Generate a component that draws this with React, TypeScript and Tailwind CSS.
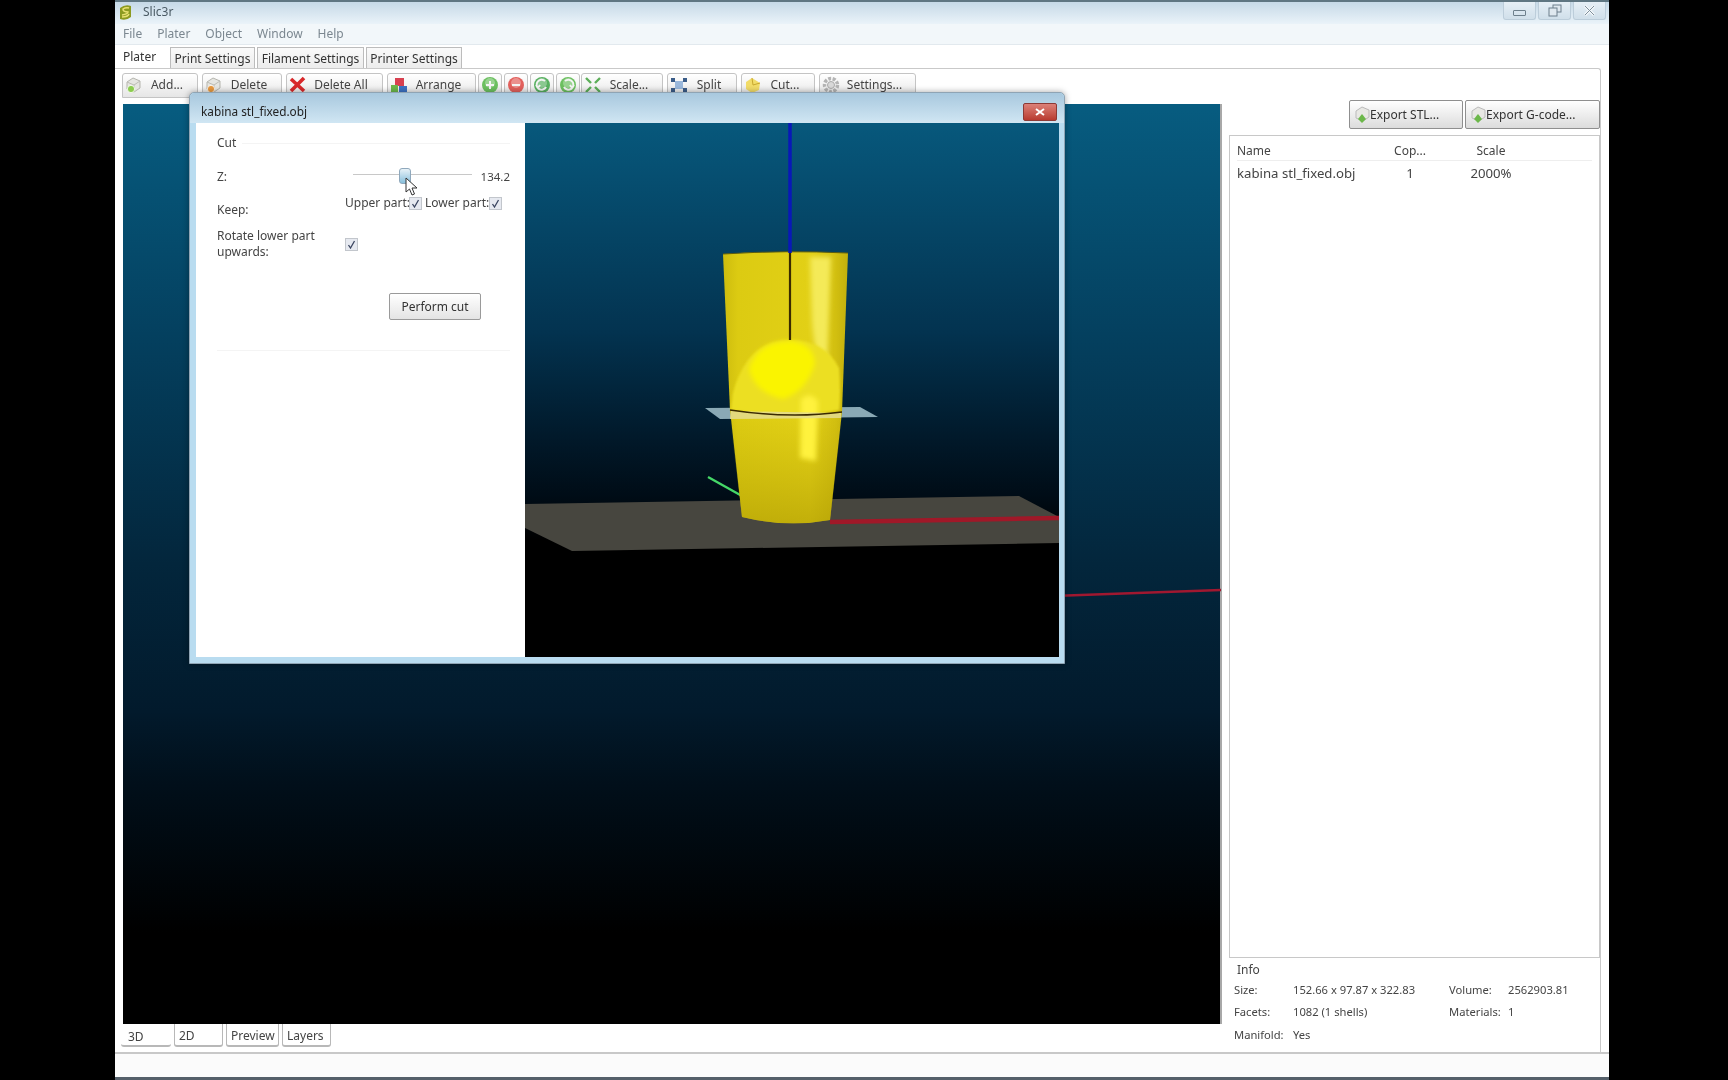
import { ReactNode } from "react";

const font = { fontFamily: '"Noto Sans", "Open Sans", sans-serif' };

function Brick({ dot }: { dot: string }) {
  return (
    <svg width="18" height="18" viewBox="0 0 18 18">
      <path d="M2 6 L8 2 L15 5 L15 12 L9 16 L2 13 Z" fill="#e6e6e2" stroke="#b5b5ae" />
      <path d="M2 6 L9 9 L15 5 M9 9 V16" fill="none" stroke="#bdbdb6" />
      <circle cx="6" cy="13" r="3.6" fill={dot} stroke="#fff" strokeWidth="0.8" />
    </svg>
  );
}

function RoundIcon({ color, sign }: { color: string; sign: string }) {
  return (
    <svg width="18" height="18" viewBox="0 0 18 18">
      <circle cx="9" cy="9" r="8" fill={color} />
      <circle cx="9" cy="7" r="5" fill="#fff" opacity="0.3" />
      <path d={sign} stroke="#f4f4f4" strokeWidth="2" fill="none" />
    </svg>
  );
}

function ToolButton({ w, icon, label, pad = "pl-[2px]" }: { w: string; icon: ReactNode; label?: string; pad?: string }) {
  return (
    <div className={`${w} ${pad} h-[25px] pb-[2px] shrink-0 flex items-center rounded-t-[3px] border border-[#c4c4c4] bg-gradient-to-b from-white to-[#e6e6e6]`}>
      {icon}
      {label && <span className="flex-1 pr-[6px] text-center text-[12px] text-[#444]">{label}</span>}
    </div>
  );
}

function TopTab({ w, label }: { w: string; label: string }) {
  return (
    <div className={`${w} h-[21px] pt-[2px] shrink-0 flex items-center justify-center border border-b-0 border-[#bcbcbc] bg-gradient-to-b from-[#fafafa] to-[#ececec] text-[12px] text-[#333]`}>
      {label}
    </div>
  );
}

function BottomTab({ w, label, active }: { w: string; label: string; active?: boolean }) {
  return (
    <div className={`${w} h-[23px] shrink-0 flex items-center pl-[4px] border-b-2 border-[#b8b8b8] rounded-b-[3px] text-[12px] text-[#444] ${active ? "pt-[4px] pl-[7px]" : "border-r border-l pt-[2px]"}`}>
      {label}
    </div>
  );
}

function CheckBox() {
  return (
    <div className="w-[13px] h-[13px] shrink-0 flex items-center justify-center border border-[#c2c6cc] bg-[#e6e9f0]">
      <svg width="9" height="9" viewBox="0 0 9 9">
        <path d="M1.5 5 L3.5 8 L7.5 1" fill="none" stroke="#3b4560" strokeWidth="1.3" />
      </svg>
    </div>
  );
}

function WinButton({ children }: { children: ReactNode }) {
  return (
    <div className="w-[33px] h-[18px] flex items-center justify-center rounded-b-[3px] border border-t-0 border-[#bccdda] bg-gradient-to-b from-[#e6eff6] to-[#d0dfea]">
      {children}
    </div>
  );
}

function ExportButton({ w, label }: { w: string; label: string }) {
  return (
    <div className={`${w} h-[29px] flex items-center pl-[5px] rounded-[2px] border border-[#8f8f8f] bg-gradient-to-b from-white to-[#dcdcdc] text-[12px] text-[#333]`}>
      <svg width="16" height="18" viewBox="0 0 16 18">
        <path d="M1 5 L7 1 L14 4 L14 11 L8 15 L1 12 Z" fill="#e8e8e4" stroke="#bbb" />
        <path d="M3 13 L7 8 L11 13 L7 17 Z" fill="#6cb84a" />
      </svg>
      <span className="-ml-[1px]">{label}</span>
    </div>
  );
}

function InfoRow({ label, value, label2, value2 }: { label: string; value: string; label2?: string; value2?: string }) {
  return (
    <div className="h-[22.5px] flex items-center text-[11.2px] text-[#444]">
      <span className="w-[59px]">{label}</span>
      <span className="w-[156px]">{value}</span>
      {label2 && <span className="w-[59px]">{label2}</span>}
      {value2 && <span>{value2}</span>}
    </div>
  );
}

function ModelScene() {
  return (
    <svg width="534" height="535" viewBox="0 0 534 535">
      <defs>
        <linearGradient id="bodyShade" x1="0" x2="1" y1="0" y2="0">
          <stop offset="0" stopColor="#cdbc0e" />
          <stop offset="0.12" stopColor="#dccb12" />
          <stop offset="0.7" stopColor="#e2d016" />
          <stop offset="0.9" stopColor="#d2bf10" />
          <stop offset="1" stopColor="#c2b00c" />
        </linearGradient>
        <linearGradient id="lowerShade" x1="0" x2="0" y1="0" y2="1">
          <stop offset="0" stopColor="#b39f00" stopOpacity="0" />
          <stop offset="1" stopColor="#a89400" stopOpacity="0.55" />
        </linearGradient>
        <filter id="soft" x="-30%" y="-30%" width="160%" height="160%">
          <feGaussianBlur stdDeviation="2.5" />
        </filter>
        <filter id="softer" x="-30%" y="-30%" width="160%" height="160%">
          <feGaussianBlur stdDeviation="0.8" />
        </filter>
      </defs>
      <polygon points="0,381 494,373 534,394 534,420 47,428 0,405" fill="#47463f" />
      <line x1="183" y1="354" x2="217" y2="373" stroke="#45d868" strokeWidth="2.4" />
      <path d="M305 399 L534 395" stroke="#a01828" strokeWidth="4.5" />
      <polygon points="180,285 335,284 353,294 195,296" fill="#8aa9b5" />
      <path d="M198 131 Q260 127 323 130 L317 289 L305 397 Q262 405 217 394 L205 287 Z" fill="url(#bodyShade)" />
      <path d="M205 296 L317 296 L305 397 Q262 405 217 394 Z" fill="url(#lowerShade)" />
      <path d="M285 134 L306 134 L302 250 Q290 240 287 200 Z" fill="#f4ea58" filter="url(#soft)" />
      <path d="M208 270 Q222 217 265 217 Q300 217 314 245 Q316 270 314 287 Q265 296 206 287 Z" fill="#ecdf20" filter="url(#softer)" />
      <path d="M224 246 Q232 219 265 218 Q288 220 290 240 Q282 268 258 276 Q230 270 224 246 Z" fill="#faf400" filter="url(#soft)" />
      <path d="M276 276 Q285 268 293 278 L291 338 L275 335 Z" fill="#fff23c" filter="url(#soft)" />
      <polygon points="206,288 316,290 316,295 205,296" fill="#e4dc90" opacity="0.85" />
      <path d="M205 287 Q265 296 317 289" fill="none" stroke="#3a2a00" strokeWidth="1.6" />
      <path d="M198 131 Q260 127 323 130" fill="none" stroke="#5a5a10" strokeWidth="1" />
      <path d="M265 0 V130" stroke="#0a18b8" strokeWidth="3.5" />
      <path d="M265 130 V217" stroke="#3a2a00" strokeWidth="2.2" />
    </svg>
  );
}

function CutDialog() {
  return (
    <div className="absolute left-[74px] top-[92px] w-[876px] h-[572px] flex flex-col rounded-t-[5px] border border-[#8fa4b4] bg-[#b9dcf0] px-[6px] pb-[6px] shadow-[0_0_6px_rgba(0,0,0,0.35)]">
      <div className="h-[30px] shrink-0 -mx-[6px] pl-[11px] pr-[7px] pt-[8px] flex items-center justify-between rounded-t-[5px] bg-gradient-to-b from-[#a8c8de] to-[#d0e6f3]">
        <span className="text-[11.8px] text-[#222]">kabina stl_fixed.obj</span>
        <div className="w-[34px] h-[18px] flex items-center justify-center rounded-[2px] border border-[#8c3a36] bg-gradient-to-b from-[#dc8078] to-[#b83a30]">
          <svg width="10" height="8" viewBox="0 0 10 8">
            <path d="M1 1 L9 7 M9 1 L1 7" stroke="#fff" strokeWidth="2" />
          </svg>
        </div>
      </div>
      <div className="flex flex-1 min-h-0">
        <div className="w-[329px] shrink-0 bg-white pl-[21px] pr-[15px] text-[12px] text-[#444]">
          <div className="h-[38px] pt-[2px] flex items-center gap-[6px]">
            <span>Cut</span>
            <div className="flex-1 h-px bg-[#f4f4f4]" />
          </div>
          <div className="h-[32px] flex items-center">
            <span className="w-[137px]">Z:</span>
            <div className="relative w-[119px] h-px bg-[#c8c8c8] -mt-[6px]">
              <div className="absolute left-[46px] -top-[6px] w-[12px] h-[16px] rounded-[3px] border border-[#8fa8bc] bg-gradient-to-b from-[#e8f2f8] to-[#88c0dc]" />
              <svg className="absolute left-[52px] top-[3px]" width="14" height="20" viewBox="0 0 14 20">
                <path d="M1 1 L1 15 L4.5 12 L7 18 L9.5 17 L7 11 L12 11 Z" fill="#fff" stroke="#333" strokeWidth="1" />
              </svg>
            </div>
            <span className="ml-[9px] text-[11.5px]">134.2</span>
          </div>
          <div className="h-[33px] flex">
            <span className="w-[128px] pt-[8px]">Keep:</span>
            <div className="flex items-center h-[24px] mt-[-2px]">
              <span className="w-[64px] whitespace-nowrap">Upper part:</span>
              <CheckBox />
              <span className="w-[64px] ml-[3px] whitespace-nowrap">Lower part:</span>
              <CheckBox />
            </div>
          </div>
          <div className="h-[36px] flex items-center">
            <span className="w-[128px] leading-[16px]">Rotate lower part upwards:</span>
            <CheckBox />
          </div>
          <div className="flex justify-end pr-[29px] mt-[31px]">
            <div className="w-[92px] h-[27px] flex items-center justify-center rounded-[2px] border border-[#9a9a9a] bg-gradient-to-b from-white to-[#e4e4e4] text-[#333]">
              Perform cut
            </div>
          </div>
          <div className="mt-[30px] h-px bg-[#f4f4f4]" />
        </div>
        <div className="w-[534px] bg-[linear-gradient(to_bottom,#07587c_0%,#033350_39%,#01192a_59%,#000c16_70%,#000_78%)]">
          <ModelScene />
        </div>
      </div>
    </div>
  );
}

export default function App() {
  return (
    <div className="w-[1728px] h-[1080px] overflow-hidden bg-black blur-[0.6px]" style={font}>
      <div className="relative ml-[115px] w-[1494px] h-[1080px] flex flex-col bg-white">
        {/* title bar */}
        <div className="h-[24px] shrink-0 flex items-start justify-between border-t-2 border-[#5f7682] bg-gradient-to-b from-[#c6d9e7] to-[#eaf3f9]">
          <div className="flex items-center h-[20px] pl-[4px]">
            <svg width="13" height="17" viewBox="0 0 13 17">
              <path d="M1 4 Q6 0 12 2 L12 13 Q7 17 1 15 Z" fill="#8c9a20" />
              <path d="M3 11 Q9 10 9 8 Q4 8 4 5 Q7 3 10 4 M3 13 Q9 13 10 10" fill="none" stroke="#e8e070" strokeWidth="1.5" />
            </svg>
            <span className="ml-[11px] text-[12px] text-[#4a5a64]">Slic3r</span>
          </div>
          <div className="flex gap-[2px] pr-[3px]">
            <WinButton>
              <div className="w-[13px] h-[6px] rounded-[1px] border border-[#6d7f8c] mt-[4px]" />
            </WinButton>
            <WinButton>
              <svg width="14" height="13" viewBox="0 0 14 13">
                <rect x="5" y="1" width="8" height="7" fill="#dfe8ef" stroke="#6d7f8c" />
                <rect x="1" y="4" width="8" height="8" fill="#dfe8ef" stroke="#6d7f8c" />
              </svg>
            </WinButton>
            <WinButton>
              <svg width="13" height="11" viewBox="0 0 13 11">
                <path d="M2 1 L11 10 M11 1 L2 10" stroke="#f2f6f9" strokeWidth="3" />
                <path d="M2 1 L11 10 M11 1 L2 10" stroke="#7d8f9c" strokeWidth="1" />
              </svg>
            </WinButton>
          </div>
        </div>
        {/* menu bar */}
        <div className="h-[21px] shrink-0 flex items-center gap-[15px] pl-[8px] bg-[#f2f7fa] border-b border-[#e2e9ee] text-[12px] text-[#7b8790]">
          <span>File</span>
          <span>Plater</span>
          <span>Object</span>
          <span>Window</span>
          <span>Help</span>
        </div>
        {/* notebook tabs */}
        <div className="h-[23px] shrink-0 flex items-end gap-[2px] pl-[55px] relative">
          <span className="absolute left-[8px] top-[3px] text-[12px] text-[#333]">Plater</span>
          <TopTab w="w-[85px]" label="Print Settings" />
          <TopTab w="w-[107px]" label="Filament Settings" />
          <TopTab w="w-[96px]" label="Printer Settings" />
        </div>
        {/* plater page */}
        <div className="flex-1 min-h-0 flex flex-col mr-[8px] border-t border-r border-[#c9c9c9] rounded-tr-[3px]">
          <div className="h-[35px] shrink-0 flex items-start gap-[4px] pl-[7px] pt-[4px]">
            <ToolButton w="w-[76px]" icon={<Brick dot="#8ccc50" />} label="Add..." />
            <ToolButton w="w-[80px]" icon={<Brick dot="#e89a40" />} label="Delete" />
            <ToolButton
              w="w-[97px]"
              icon={
                <svg width="17" height="17" viewBox="0 0 17 17">
                  <path d="M2 3 L15 15 M15 2 L2 15" stroke="#d8282a" strokeWidth="3.6" />
                </svg>
              }
              label="Delete All"
            />
            <ToolButton
              w="w-[89px]"
              icon={
                <svg width="18" height="18" viewBox="0 0 18 18">
                  <rect x="5" y="2" width="9" height="8" fill="#d84050" />
                  <rect x="1" y="9" width="7" height="7" fill="#6cb84a" />
                  <rect x="9" y="10" width="8" height="7" fill="#3c72c4" />
                </svg>
              }
              label="Arrange"
            />
            <div className="flex gap-[2px] -ml-[2px] -mr-[3px]">
              <ToolButton w="w-[24px]" icon={<RoundIcon color="#6cc060" sign="M5 9 H13 M9 5 V13" />} />
              <ToolButton w="w-[24px]" icon={<RoundIcon color="#e2605c" sign="M5 9 H13" />} />
              <ToolButton w="w-[24px]" icon={<RoundIcon color="#58b060" sign="M12 5 A5 5 0 1 0 13 11 M7 9 L5 12 L3 9" />} />
              <ToolButton w="w-[24px]" icon={<RoundIcon color="#6cc060" sign="M6 5 A5 5 0 1 1 5 11 M11 9 L13 12 L15 9" />} />
            </div>
            <ToolButton
              w="w-[82px]"
              icon={
                <svg width="18" height="18" viewBox="0 0 18 18">
                  <path d="M2 2 L7 7 M16 2 L11 7 M2 16 L7 11 M16 16 L11 11" stroke="#5cae58" strokeWidth="2.4" />
                </svg>
              }
              label="Scale..."
            />
            <ToolButton
              w="w-[70px]"
              icon={
                <svg width="18" height="18" viewBox="0 0 18 18">
                  <rect x="5" y="5" width="8" height="8" fill="#9ab8dc" />
                  <path d="M1 2 H5 V6 H1 Z M13 2 H17 V6 H13 Z M1 12 H5 V16 H1 Z M13 12 H17 V16 H13 Z" fill="#3a5c88" />
                </svg>
              }
              label="Split"
            />
            <ToolButton
              w="w-[74px]"
              icon={
                <svg width="18" height="18" viewBox="0 0 18 18">
                  <path d="M8 2 L16 7 L15 14 L8 17 L2 13 L2 6 Z" fill="#f2dc68" />
                  <path d="M8 2 L9 9 L16 7" fill="none" stroke="#c8a830" />
                </svg>
              }
              label="Cut..."
            />
            <ToolButton
              w="w-[97px]"
              icon={
                <svg width="18" height="18" viewBox="0 0 18 18">
                  <circle cx="9" cy="9" r="6.5" fill="none" stroke="#b4b4b4" strokeWidth="3.5" strokeDasharray="3 1.5" />
                  <circle cx="9" cy="9" r="3.5" fill="#d8d8d8" stroke="#aaa" />
                </svg>
              }
              label="Settings..."
            />
          </div>
          <div className="flex-1 min-h-0 flex">
            {/* left column */}
            <div className="w-[1106px] shrink-0 flex flex-col pl-[8px]">
              <div className="relative h-[920px] shrink-0 w-[1099px] border-r-2 border-[#a8a8a8] bg-[linear-gradient(to_bottom,#075c80_0%,#04405f_25%,#03263c_50%,#021a2c_66%,#010f1a_74%,#000_90%)]">
                <svg className="absolute left-0 top-0" width="1098" height="920" viewBox="0 0 1098 920">
                  <path d="M930 492 L1098 486" stroke="#a01830" strokeWidth="2.4" />
                </svg>
              </div>
              <div className="h-[23px] shrink-0 flex gap-[3px] -ml-[2px]">
                <BottomTab w="w-[50px]" label="3D" active />
                <BottomTab w="w-[49px]" label="2D" />
                <BottomTab w="w-[53px]" label="Preview" />
                <BottomTab w="w-[49px]" label="Layers" />
              </div>
            </div>
            {/* right column */}
            <div className="flex-1 min-w-0 flex flex-col pl-[8px]">
              <div className="h-[35px] shrink-0 flex justify-end gap-[2px] -mt-[4px]">
                <ExportButton w="w-[114px]" label="Export STL..." />
                <ExportButton w="w-[135px]" label="Export G-code..." />
              </div>
              <div className="h-[823px] shrink-0 border border-[#c8c8c8] pt-[6px] px-[7px] text-[#444]">
                <div className="h-[19px] flex items-center border-b border-[#eeeeee] text-[12px]">
                  <span className="w-[148px]">Name</span>
                  <span className="w-[50px] text-center">Cop...</span>
                  <span className="w-[112px] text-center">Scale</span>
                </div>
                <div className="h-[26px] flex items-center text-[13.2px]">
                  <span className="w-[148px] whitespace-nowrap">kabina stl_fixed.obj</span>
                  <span className="w-[50px] text-center">1</span>
                  <span className="w-[112px] text-center">2000%</span>
                </div>
              </div>
              <div className="pl-[5px] pt-[2px]">
                <div className="h-[19px] flex items-center pl-[3px] text-[12px] text-[#444]">Info</div>
                <InfoRow label="Size:" value="152.66 x 97.87 x 322.83" label2="Volume:" value2="2562903.81" />
                <InfoRow label="Facets:" value="1082 (1 shells)" label2="Materials:" value2="1" />
                <InfoRow label="Manifold:" value="Yes" />
              </div>
            </div>
          </div>
        </div>
        {/* status bar */}
        <div className="h-[25px] shrink-0 border-t-2 border-[#c8c8c8] bg-[#fbfbfb]" />
        <div className="h-[3px] shrink-0 bg-[#55606a]" />
        <CutDialog />
      </div>
    </div>
  );
}
